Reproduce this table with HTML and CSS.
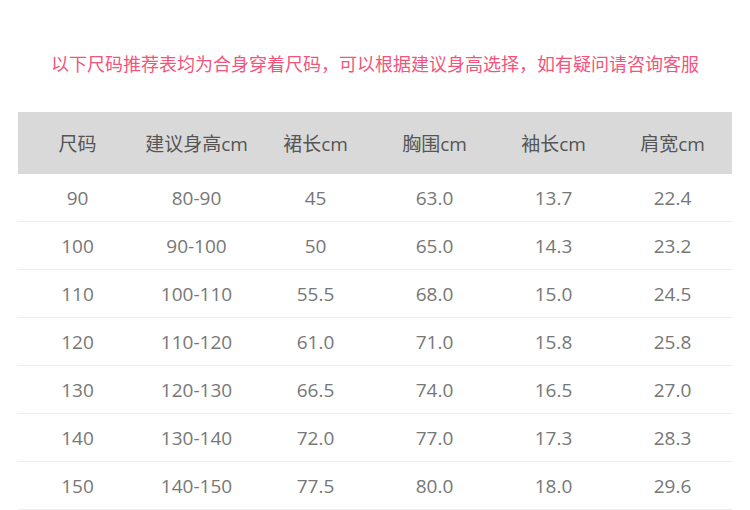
FILE: index.html
```html
<!DOCTYPE html>
<html lang="zh">
<head>
<meta charset="utf-8">
<link rel="stylesheet" href="styles.css">
</head>
<body>
<div class="page">
  <p class="note">以下尺码推荐表均为合身穿着尺码，可以根据建议身高选择，如有疑问请咨询客服</p>
  <div class="table">
    <div class="row head">
      <div>尺码</div><div>建议身高cm</div><div>裙长cm</div><div>胸围cm</div><div>袖长cm</div><div>肩宽cm</div>
    </div>
    <div class="row"><div>90</div><div>80-90</div><div>45</div><div>63.0</div><div>13.7</div><div>22.4</div></div>
    <div class="row"><div>100</div><div>90-100</div><div>50</div><div>65.0</div><div>14.3</div><div>23.2</div></div>
    <div class="row"><div>110</div><div>100-110</div><div>55.5</div><div>68.0</div><div>15.0</div><div>24.5</div></div>
    <div class="row"><div>120</div><div>110-120</div><div>61.0</div><div>71.0</div><div>15.8</div><div>25.8</div></div>
    <div class="row"><div>130</div><div>120-130</div><div>66.5</div><div>74.0</div><div>16.5</div><div>27.0</div></div>
    <div class="row"><div>140</div><div>130-140</div><div>72.0</div><div>77.0</div><div>17.3</div><div>28.3</div></div>
    <div class="row"><div>150</div><div>140-150</div><div>77.5</div><div>80.0</div><div>18.0</div><div>29.6</div></div>
  </div>
</div>
</body>
</html>
```

FILE: styles.css
```css
html, body {
  margin: 0;
  padding: 0;
  background: #fff;
}
.page {
  width: 750px;
  font-family: "Open Sans", "Noto Sans CJK SC", sans-serif;
  font-size: 19px;
}
.note {
  margin: 0;
  padding-top: 50px;
  height: 62px;
  line-height: 26px;
  text-align: center;
  color: #f2557b;
  font-family: "Noto Sans CJK SC", sans-serif;
  font-size: 18px;
}
.table {
  margin: 0 18px;
}
.row {
  display: grid;
  grid-template-columns: repeat(6, 1fr);
  height: 47px;
  border-bottom: 1px solid #ececec;
  align-items: center;
  text-align: center;
  color: #777;
}
.row.head {
  height: 62px;
  border-bottom: 0;
  background: #d9d9d9;
  color: #555;
}
```
